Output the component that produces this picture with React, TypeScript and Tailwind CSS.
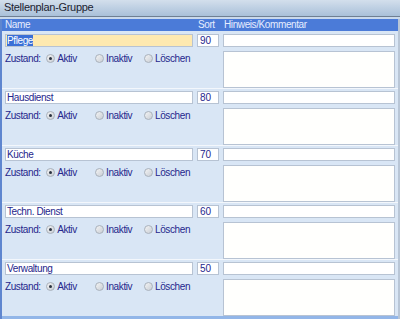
import React from 'react';

interface Gruppe {
  name: string;
  sort: number;
}

const gruppen: Gruppe[] = [
  { name: 'Pflege', sort: 90 },
  { name: 'Hausdienst', sort: 80 },
  { name: 'Küche', sort: 70 },
  { name: 'Techn. Dienst', sort: 60 },
  { name: 'Verwaltung', sort: 50 },
];

const font = { fontFamily: '"Liberation Sans", Arial, sans-serif' };

export default function App() {
  return (
    <div className="w-[400px] h-[319px] overflow-hidden bg-[#d9e6f5] flex flex-col text-[10px] tracking-[-0.4px] text-[#25268c]" style={font}>
      <div className="h-[16px] shrink-0 bg-gradient-to-b from-[#d3dfec] to-[#a9c0d9] px-[4px] text-[11px] tracking-[-0.3px] leading-[15px] text-[#1c2330]">
        Stellenplan-Gruppe
      </div>
      <div className="h-[1px] shrink-0 bg-[#6f7f92]" />
      <div className="h-[2px] shrink-0 bg-[#c9d9ec]" />
      <div className="flex-1 flex flex-col border-l-2 border-l-[#5f86cf] border-r-2 border-r-[#b9c6d6]">
        <div className="h-[12px] shrink-0 bg-[#4b7bd8] flex items-center text-[#e6edff] leading-[12px]">
          <div className="w-[193px] pl-[3px]">Name</div>
          <div className="w-[29px] pl-[3px]">Sort</div>
          <div className="flex-1">Hinweis/Kommentar</div>
        </div>
        {gruppen.map((g, i) => (
          <GruppeRow key={g.name} gruppe={g} first={i === 0} />
        ))}
        <div className="flex-1 bg-[#92b6e8]" />
      </div>
    </div>
  );
}

function GruppeRow({ gruppe, first }: { gruppe: Gruppe; first: boolean }) {
  return (
    <div className={`shrink-0 flex pt-[2px] pl-[3px] ${first ? 'pt-[3px]' : 'border-t border-t-[#f3f7fc]'}`}>
      <div className="w-[188px] flex flex-col">
        <div className={`h-[13px] border border-[#b7c3d3] leading-[11px] pl-[1px] ${first ? 'bg-[#fee9b0]' : 'bg-white'}`}>
          {first ? <span className="bg-[#3a6fd6] text-white">{gruppe.name}</span> : gruppe.name}
        </div>
        <div className="flex items-center h-[12px] mt-[5px]">
          <span className="w-[42px]">Zustand:</span>
          <Radio label="Aktiv" checked />
          <Radio label="Inaktiv" />
          <Radio label="Löschen" />
        </div>
      </div>
      <div className="ml-[4px] w-[22px] h-[13px] border border-[#b7c3d3] bg-white leading-[11px] pl-[2px] tracking-normal">
        {gruppe.sort}
      </div>
      <div className="ml-[4px] w-[172px] flex flex-col">
        <div className="h-[13px] border border-[#b7c3d3] bg-white" />
        <div className="h-[37px] mt-[4px] border border-[#b7c3d3] bg-[#fffffd]" />
      </div>
    </div>
  );
}

function Radio({ label, checked = false }: { label: string; checked?: boolean }) {
  return (
    <span className="w-[50px] flex items-center">
      <span className="w-[9px] h-[9px] rounded-full border border-[#a9b1bb] bg-gradient-to-br from-[#f4f4f4] to-[#c9ced5] flex items-center justify-center">
        {checked && <span className="w-[3px] h-[3px] rounded-full bg-[#2a3240]" />}
      </span>
      <span className="ml-[2px]">{label}</span>
    </span>
  );
}
